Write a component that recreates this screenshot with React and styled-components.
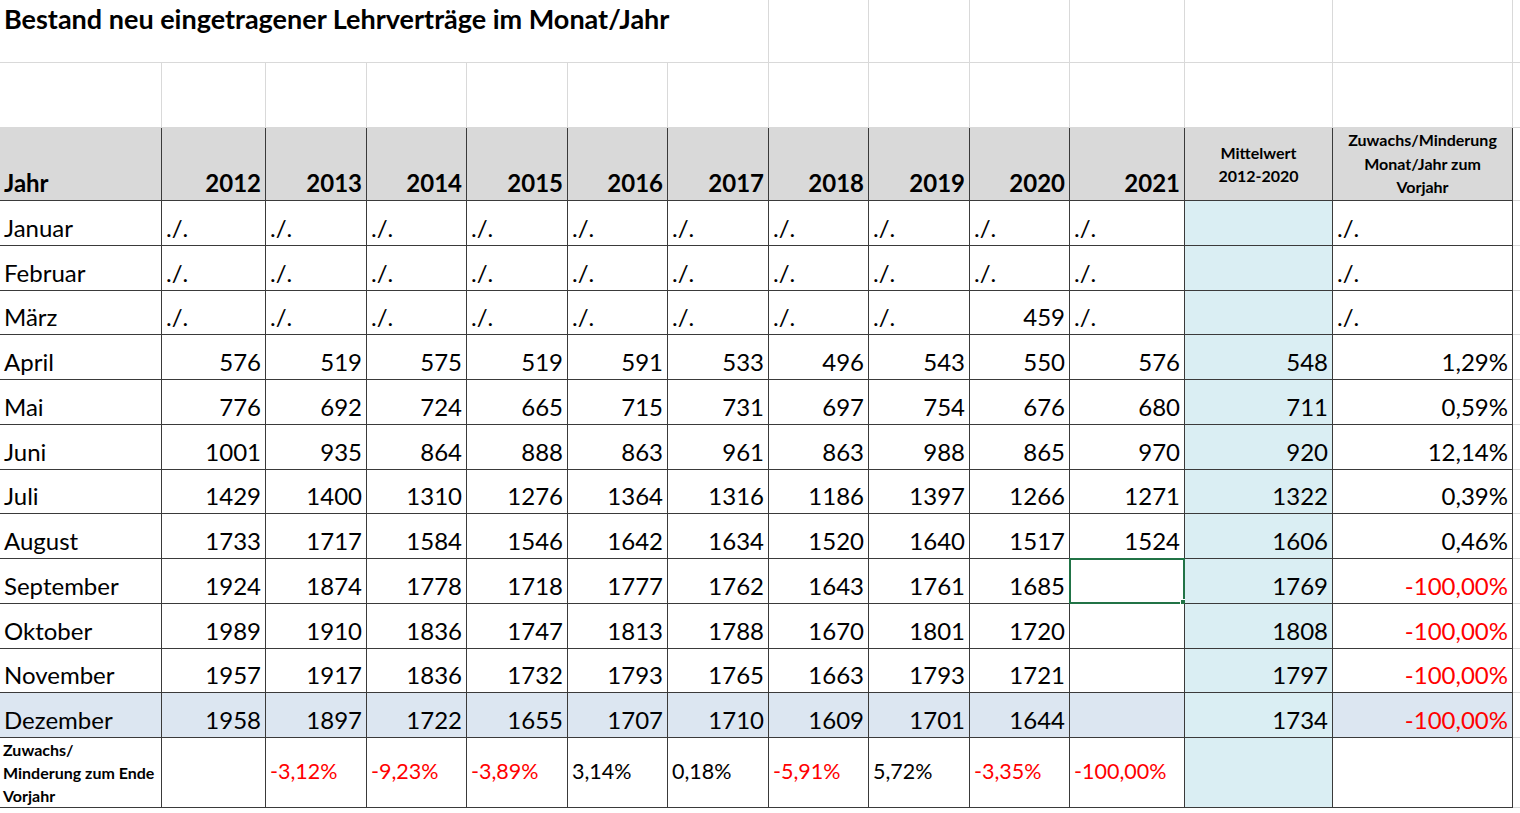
import React from "react";
import styled, { createGlobalStyle } from "styled-components";

const Global = createGlobalStyle`
  body { margin: 0; background: #fff; font-family: Lato, "Liberation Sans", sans-serif; color: #000; }
`;

const COLS = "162px 104px 101px 100px 101px 100px 101px 100px 101px 100px 115px 148px 180px 7px";

const Sheet = styled.div`
  display: grid;
  grid-template-columns: ${COLS};
  grid-template-rows: 63px 65px 73px repeat(12, 44.75px) 70px;
  width: 1520px;
  overflow: hidden;
`;

const Cell = styled.div`
  box-sizing: border-box;
  border-right: 1px solid ${p => (p.$light ? "#d9d9d9" : "#3a3a3a")};
  border-bottom: 1px solid ${p => (p.$light ? "#d9d9d9" : "#3a3a3a")};
  background: ${p => p.$bg || "#fff"};
  display: flex;
  align-items: ${p => p.$v || "flex-end"};
  justify-content: ${p => p.$align || "flex-start"};
  padding: 0 4px 2px 4px;
  font-size: ${p => p.$fs || 24}px;
  font-weight: ${p => (p.$bold ? 700 : 400)};
  color: ${p => (p.$red ? "#ff0000" : "#000")};
  line-height: 1.2;
  white-space: nowrap;
  position: relative;
  ${p => (p.$span ? `grid-column: span ${p.$span};` : "")}
`;

const Title = styled(Cell)`
  align-items: flex-start;
  padding-top: 3px;
  font-size: 27px;
  font-weight: 700;
  border-right: 1px solid #d9d9d9;
`;

const HeadSmall = styled(Cell)`
  flex-direction: column;
  align-items: center;
  justify-content: ${p => p.$top ? "flex-start" : "center"};
  font-size: 16px;
  font-weight: 700;
  line-height: 23.5px;
  text-align: center;
  padding: 0 2px;
`;

const FootLabel = styled(Cell)`
  flex-direction: column;
  align-items: flex-start;
  justify-content: center;
  font-size: 16px;
  font-weight: 700;
  line-height: 23px;
  padding: 0 3px;
`;

const Selected = styled.div`
  position: absolute;
  inset: -1px;
  border: 2px solid #217346;
  pointer-events: none;
  &::after {
    content: "";
    position: absolute;
    right: -4px; bottom: -4px;
    width: 5px; height: 5px;
    background: #217346;
    border: 1px solid #fff;
  }
`;

const HEAD = "#d9d9d9";
const MEAN = "#daeef3";
const DEC = "#dce6f1";
const years = [2012, 2013, 2014, 2015, 2016, 2017, 2018, 2019, 2020, 2021];
const S = "./.";
const rows = [
  ["Januar", [S,S,S,S,S,S,S,S,S,S], "", S],
  ["Februar", [S,S,S,S,S,S,S,S,S,S], "", S],
  ["März", [S,S,S,S,S,S,S,S,"459",S], "", S],
  ["April", ["576","519","575","519","591","533","496","543","550","576"], "548", "1,29%"],
  ["Mai", ["776","692","724","665","715","731","697","754","676","680"], "711", "0,59%"],
  ["Juni", ["1001","935","864","888","863","961","863","988","865","970"], "920", "12,14%"],
  ["Juli", ["1429","1400","1310","1276","1364","1316","1186","1397","1266","1271"], "1322", "0,39%"],
  ["August", ["1733","1717","1584","1546","1642","1634","1520","1640","1517","1524"], "1606", "0,46%"],
  ["September", ["1924","1874","1778","1718","1777","1762","1643","1761","1685",""], "1769", "-100,00%"],
  ["Oktober", ["1989","1910","1836","1747","1813","1788","1670","1801","1720",""], "1808", "-100,00%"],
  ["November", ["1957","1917","1836","1732","1793","1765","1663","1793","1721",""], "1797", "-100,00%"],
  ["Dezember", ["1958","1897","1722","1655","1707","1710","1609","1701","1644",""], "1734", "-100,00%"],
];
const foot = ["", "-3,12%", "-9,23%", "-3,89%", "3,14%", "0,18%", "-5,91%", "5,72%", "-3,35%", "-100,00%"];

export default function App() {
  return (
    <Sheet>
      <Global />
      <Title $span={7} $light>Bestand neu eingetragener Lehrverträge im Monat/Jahr</Title>
      {Array.from({ length: 7 }).map((_, i) => <Cell key={"t" + i} $light />)}
      {Array.from({ length: 14 }).map((_, i) => <Cell key={"e" + i} $light />)}
      <Cell $bg={HEAD} $bold>Jahr</Cell>
      {years.map(y => <Cell key={y} $bg={HEAD} $bold $align="flex-end">{y}</Cell>)}
      <HeadSmall $bg={HEAD}><span>Mittelwert</span><span>2012-2020</span></HeadSmall>
      <HeadSmall $bg={HEAD} $top><span>Zuwachs/Minderung</span><span>Monat/Jahr zum</span><span>Vorjahr</span></HeadSmall>
      <Cell $light />
      {rows.map(([m, vals, mean, pct]) => {
        const bg = m === "Dezember" ? DEC : undefined;
        return (
          <React.Fragment key={m}>
            <Cell $bg={bg}>{m}</Cell>
            {vals.map((v, i) => (
              <Cell key={i} $bg={bg} $align={v === S ? "flex-start" : "flex-end"}>
                {v}
                {m === "September" && i === 9 && <Selected />}
              </Cell>
            ))}
            <Cell $bg={MEAN} $align="flex-end">{mean}</Cell>
            <Cell $bg={bg} $align={pct === S ? "flex-start" : "flex-end"} $red={pct.startsWith("-")}>{pct}</Cell>
            <Cell $light />
          </React.Fragment>
        );
      })}
      <FootLabel><span>Zuwachs/</span><span>Minderung zum Ende</span><span>Vorjahr</span></FootLabel>
      {foot.map((f, i) => (
        <Cell key={"f" + i} $v="center" $fs={21.5} $red={f.startsWith("-")}>{f}</Cell>
      ))}
      <Cell $bg={MEAN} />
      <Cell />
      <Cell $light />
    </Sheet>
  );
}
